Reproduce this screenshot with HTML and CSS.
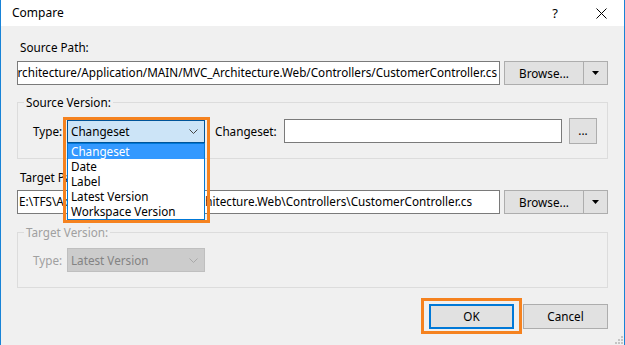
FILE: index.html
```html
<!DOCTYPE html>
<html>
<head>
<meta charset="utf-8">
<link rel="stylesheet" href="styles.css">
</head>
<body>
<div class="window">
  <div class="titlebar">
    <div class="title">Compare</div>
    <div class="tb-btn help">?</div>
    <div class="tb-btn close">
      <svg width="11" height="11" viewBox="0 0 11 11"><path d="M0.5 0.5 L10.5 10.5 M10.5 0.5 L0.5 10.5" stroke="#000" stroke-width="1" fill="none"/></svg>
    </div>
  </div>
  <div class="content">
    <div class="label first">Source Path:</div>
    <div class="path-row">
      <div class="textbox clip-end"><span>$/MVC_Architecture/Application/MAIN/MVC_Architecture.Web/Controllers/CustomerController.cs</span></div>
      <div class="split-btn">
        <div class="split-main">Browse...</div>
        <div class="split-arrow"><svg width="7" height="4" viewBox="0 0 7 4"><path d="M0 0 H7 L3.5 4 Z" fill="#000"/></svg></div>
      </div>
    </div>

    <fieldset class="group">
      <legend>Source Version:</legend>
      <div class="ver-row">
        <div class="type-label">Type:</div>
        <div class="combo-wrap">
          <div class="combo active">
            <span>Changeset</span>
            <svg width="9" height="5" viewBox="0 0 9 5"><path d="M0.5 0.5 L4.5 4.5 L8.5 0.5" stroke="#444" stroke-width="1" fill="none"/></svg>
          </div>
          <div class="dropdown">
            <div class="item selected">Changeset</div>
            <div class="item">Date</div>
            <div class="item">Label</div>
            <div class="item">Latest Version</div>
            <div class="item">Workspace Version</div>
          </div>
          <div class="annot annot-combo"></div>
        </div>
        <div class="cs-label">Changeset:</div>
        <div class="textbox cs-input"></div>
        <div class="btn dots">...</div>
      </div>
    </fieldset>

    <div class="label second">Target Path:</div>
    <div class="path-row">
      <div class="textbox"><span>E:\TFS\Application\MAIN\MVC_Architecture.Web\Controllers\CustomerController.cs</span></div>
      <div class="split-btn">
        <div class="split-main">Browse...</div>
        <div class="split-arrow"><svg width="7" height="4" viewBox="0 0 7 4"><path d="M0 0 H7 L3.5 4 Z" fill="#000"/></svg></div>
      </div>
    </div>

    <fieldset class="group disabled">
      <legend>Target Version:</legend>
      <div class="ver-row">
        <div class="type-label">Type:</div>
        <div class="combo off">
          <span>Latest Version</span>
          <svg width="9" height="5" viewBox="0 0 9 5"><path d="M0.5 0.5 L4.5 4.5 L8.5 0.5" stroke="#a8a8a8" stroke-width="1" fill="none"/></svg>
        </div>
      </div>
    </fieldset>

    <div class="actions">
      <div class="ok-wrap">
        <div class="btn action ok">OK</div>
        <div class="annot annot-ok"></div>
      </div>
      <div class="btn action">Cancel</div>
    </div>
    <svg class="grip" width="8" height="8" viewBox="0 0 8 8">
      <rect x="6" y="0" width="2" height="2" fill="#c4c4c4"/>
      <rect x="3" y="3" width="2" height="2" fill="#c4c4c4"/>
      <rect x="6" y="3" width="2" height="2" fill="#c4c4c4"/>
      <rect x="0" y="6" width="2" height="2" fill="#c4c4c4"/>
      <rect x="3" y="6" width="2" height="2" fill="#c4c4c4"/>
      <rect x="6" y="6" width="2" height="2" fill="#c4c4c4"/>
    </svg>
  </div>
</div>
</body>
</html>
```

FILE: styles.css
```css
* { box-sizing: border-box; }
html, body { margin: 0; padding: 0; background: #f0f0f0; }
body {
  font-family: "Noto Sans", "Open Sans", sans-serif;
  font-size: 11.7px;
  color: #000;
}
.window {
  width: 625px;
  height: 345px;
  border-left: 1px solid #1883d7;
  border-right: 1px solid #1883d7;
  background: #f0f0f0;
  display: flex;
  flex-direction: column;
  overflow: hidden;
}
.titlebar {
  height: 26px;
  background: #fff;
  display: flex;
  align-items: center;
  flex: none;
}
.title {
  flex: 1;
  padding-left: 11px;
  font-size: 12px;
  line-height: 26px;
}
.tb-btn {
  width: 46px;
  height: 26px;
  display: flex;
  align-items: center;
  justify-content: center;
}
.help { font-size: 13px; }
.content {
  flex: 1;
  position: relative;
  padding: 0 16px 0 16px;
}
.label { line-height: 15px; padding-left: 3px; }
.label.first { margin-top: 14px; }
.label.second { margin-top: 11px; }
.path-row {
  display: flex;
  gap: 4px;
  height: 24px;
  margin-top: 6px;
}
.label.second + .path-row { margin-top: 5px; }
.textbox {
  flex: 1;
  min-width: 0;
  background: #fff;
  border: 1px solid #7a7a7a;
  height: 24px;
  line-height: 21px;
  padding: 0 2px 0 1px;
  white-space: nowrap;
  overflow: hidden;
  display: flex;
}
.textbox.clip-end { justify-content: flex-end; padding-right: 2px; }
.textbox span { flex: none; }
.split-btn {
  width: 104px;
  height: 24px;
  border: 1px solid #adadad;
  background: #e1e1e1;
  display: flex;
  flex: none;
}
.split-main {
  width: 79px;
  text-align: center;
  line-height: 22px;
  border-right: 1px solid #adadad;
}
.split-arrow {
  flex: 1;
  display: flex;
  align-items: center;
  justify-content: center;
}
.group {
  margin: 10px 0 0 0;
  padding: 9px 10px 14px 6px;
  border: 1px solid #dcdcdc;
  min-inline-size: 0;
}
.group legend {
  padding: 0 2px;
  line-height: 14px;
}
.group.disabled { margin-top: 11px; padding-bottom: 15px; }
.group.disabled legend, .group.disabled .type-label { color: #a0a0a0; }
.ver-row {
  display: flex;
  align-items: center;
  height: 26px;
  padding-left: 9px;
}
.group.disabled .ver-row { height: 24px; }
.type-label { width: 34px; flex: none; }
.combo-wrap { position: relative; width: 138px; flex: none; }
.combo {
  width: 138px;
  height: 23px;
  display: flex;
  align-items: center;
  justify-content: space-between;
  padding: 0 6px 0 3px;
  border: 1px solid #005499;
  background: #cce4f7;
}
.combo.off {
  height: 24px;
  background: #cccccc;
  border-color: #bfbfbf;
  color: #838383;
  flex: none;
}
.dropdown {
  position: absolute;
  left: 0;
  top: 23px;
  width: 138px;
  background: #fff;
  border: 1px solid #0078d7;
  z-index: 5;
}
.item {
  height: 15px;
  line-height: 15px;
  padding-left: 3px;
}
.item.selected { background: #3399ff; color: #fff; }
.annot {
  position: absolute;
  border: 3px solid #f5821f;
  pointer-events: none;
  z-index: 6;
}
.annot-combo { left: -4px; right: -5px; top: -3px; height: 106px; }
.cs-label { margin-left: 10px; width: 69px; flex: none; }
.cs-input { height: 24px; flex: 1; }
.btn {
  border: 1px solid #adadad;
  background: #e1e1e1;
  text-align: center;
}
.dots {
  width: 28px;
  height: 26px;
  line-height: 22px;
  margin-left: 7px;
  flex: none;
}
.actions {
  display: flex;
  justify-content: flex-end;
  gap: 9px;
  margin-top: 16px;
}
.ok-wrap { position: relative; }
.action {
  width: 85px;
  height: 25px;
  line-height: 23px;
}
.ok { border: 2px solid #0078d7; line-height: 21px; }
.annot-ok { left: -8px; right: -8px; top: -6px; bottom: -5px; }
.grip { position: absolute; right: 1px; bottom: 1px; }
```
